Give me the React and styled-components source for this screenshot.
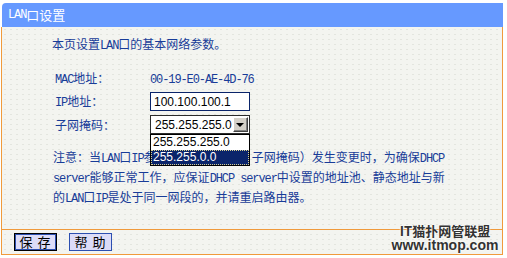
import React from "react";
import styled, { createGlobalStyle } from "styled-components";

const BLUE = "#183c98";
const ORANGE = "#f09a3c";

const GlobalStyle = createGlobalStyle`
  body {
    margin: 0;
    background: #fff;
  }
`;

const Frame = styled.div`
  position: relative;
  width: 507px;
  height: 258px;
  padding: 3px 0 0 1px;
  box-sizing: border-box;
  font-family: "Noto Sans CJK SC", sans-serif;
  font-size: 12px;
  line-height: 18px;
  color: ${BLUE};
`;

const Panel = styled.div`
  width: 502px;
`;

const TitleBar = styled.div`
  height: 24px;
  margin-left: 1px;
  padding-left: 6px;
  display: flex;
  align-items: center;
  background: #6699ff;
  border-radius: 4px 0 0 0;
  color: #fff;
  font-size: 13px;
`;

const Body = styled.div`
  border: 1px solid ${ORANGE};
  border-top: none;
  background-color: #f3f4f0;
  background-image: radial-gradient(circle, #e3e5df 0.8px, transparent 1.1px);
  background-size: 6px 5px;
`;

const Content = styled.div`
  height: 203px;
  box-sizing: border-box;
  padding: 8px 0 0 50px;
  border-bottom: 1px solid ${ORANGE};
`;

const Lat = styled.span`
  font-family: "Liberation Mono", monospace;
  font-size: 12px;
  letter-spacing: -1.1px;
`;

const Form = styled.div`
  display: grid;
  grid-template-columns: 95px auto;
  grid-auto-rows: 23px;
  align-items: center;
  justify-content: start;
  margin: 12px 0 0 3px;
`;

const Label = styled.div`
  white-space: nowrap;
`;

const Value = styled.div`
  white-space: nowrap;
`;

const TextBox = styled.input`
  width: 100px;
  height: 19px;
  box-sizing: border-box;
  margin: 0;
  padding: 0 3px;
  border: 1px solid #0a246a;
  background: #fff;
  font-family: "Liberation Sans", Arial, sans-serif;
  font-size: 12px;
  color: #000;
  outline: none;
`;

const SelectWrap = styled.div`
  position: relative;
  z-index: 2;
  width: 100px;
`;

const SelectBox = styled.div`
  height: 19px;
  box-sizing: border-box;
  display: flex;
  align-items: center;
  justify-content: space-between;
  padding: 0 1px 0 4px;
  border: 1px solid #2b2b2b;
  background: #fff;
  font-family: "Liberation Sans", Arial, sans-serif;
  font-size: 12px;
  color: #000;
`;

const ArrowButton = styled.div`
  width: 15px;
  height: 15px;
  box-sizing: border-box;
  display: flex;
  align-items: center;
  justify-content: center;
  background: #d4d0c8;
  border: 1px solid;
  border-color: #fff #404040 #404040 #fff;
  box-shadow: inset -1px -1px #808080;

  &::after {
    content: "";
    border-left: 4px solid transparent;
    border-right: 4px solid transparent;
    border-top: 4px solid #000;
    margin: 1px 1px 0 0;
  }
`;

const ListBox = styled.div`
  position: absolute;
  top: 100%;
  left: 0;
  width: 100px;
  box-sizing: border-box;
  border: 1px solid #000;
  background: #fff;
  font-family: "Liberation Sans", Arial, sans-serif;
  font-size: 12px;
  color: #000;
`;

const Option = styled.div`
  height: 15px;
  line-height: 15px;
  padding-left: 2px;
  background: ${(p) => (p.$active ? "#0a246a" : "transparent")};
  color: ${(p) => (p.$active ? "#fff" : "#000")};
  outline: ${(p) => (p.$active ? "1px dotted #d8d090" : "none")};
  outline-offset: -1px;
`;

const Intro = styled.div`
  white-space: nowrap;
`;

const Note = styled.div`
  margin: 12px 0 0 1px;
`;

const NoteLine = styled.div`
  white-space: nowrap;
`;

const ButtonBar = styled.div`
  height: 24px;
  box-sizing: border-box;
  display: flex;
  gap: 12px;
  padding: 3px 0 0 12px;
`;

const Button = styled.button`
  width: 43px;
  height: 18px;
  box-sizing: border-box;
  margin: 0;
  padding: 0;
  border: 1px solid ${(p) => (p.$focused ? "#000" : "#2c4fb0")};
  box-shadow: ${(p) => (p.$focused ? "inset 0 0 0 1px #2c4fb0" : "none")};
  background: #dcdcf8;
  font-family: "Noto Sans CJK SC", sans-serif;
  font-size: 13px;
  line-height: 16px;
  letter-spacing: 1px;
  color: #000;
  white-space: pre;
`;

const Watermark = styled.div`
  position: absolute;
  left: 390px;
  top: 224px;
  width: 110px;
  text-align: center;
  color: #333;
  font-weight: bold;
  text-shadow: 0 0 2px #fff, 0 0 2px #fff;
`;

const MarkTitle = styled.div`
  font-family: "Noto Sans CJK SC", sans-serif;
  font-size: 13px;
  line-height: 14px;
`;

const MarkUrl = styled.div`
  font-family: "Liberation Sans", Arial, sans-serif;
  font-size: 14px;
  line-height: 14px;
`;

const mix = (s) =>
  s.split(/([\x20-\x7e]+)/).map((part, i) =>
    i % 2 ? <Lat key={i}>{part}</Lat> : part
  );

const noteLines = [
  "注意：当LAN口IP参数（包括IP地址、子网掩码）发生变更时，为确保DHCP",
  "server能够正常工作，应保证DHCP server中设置的地址池、静态地址与新",
  "的LAN口IP是处于同一网段的，并请重启路由器。",
];

const masks = ["255.255.255.0", "255.255.0.0"];

export default function App() {
  return (
    <Frame>
      <GlobalStyle />
      <Panel>
        <TitleBar>{mix("LAN口设置")}</TitleBar>
        <Body>
          <Content>
            <Intro>{mix("本页设置LAN口的基本网络参数。")}</Intro>
            <Form>
              <Label>{mix("MAC地址：")}</Label>
              <Value>{mix("00-19-E0-AE-4D-76")}</Value>
              <Label>{mix("IP地址：")}</Label>
              <TextBox defaultValue="100.100.100.1" />
              <Label>子网掩码：</Label>
              <SelectWrap>
                <SelectBox>
                  <span>255.255.255.0</span>
                  <ArrowButton />
                </SelectBox>
                <ListBox>
                  {masks.map((m, i) => (
                    <Option key={m} $active={i === 1}>
                      {m}
                    </Option>
                  ))}
                </ListBox>
              </SelectWrap>
            </Form>
            <Note>
              {noteLines.map((line) => (
                <NoteLine key={line}>{mix(line)}</NoteLine>
              ))}
            </Note>
          </Content>
          <ButtonBar>
            <Button $focused>保 存</Button>
            <Button>帮 助</Button>
          </ButtonBar>
        </Body>
      </Panel>
      <Watermark>
        <MarkTitle>IT猫扑网管联盟</MarkTitle>
        <MarkUrl>www.itmop.com</MarkUrl>
      </Watermark>
    </Frame>
  );
}
